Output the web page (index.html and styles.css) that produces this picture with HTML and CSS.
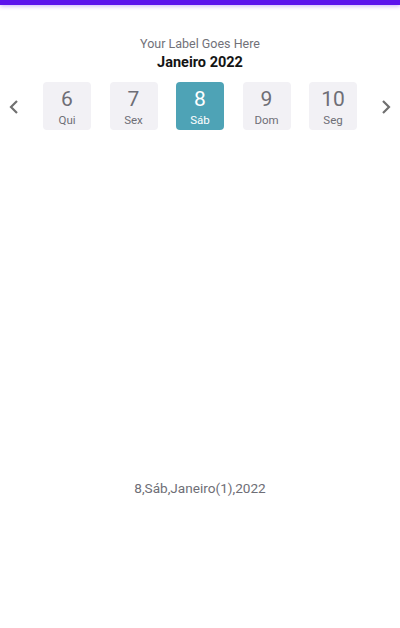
FILE: index.html
```html
<!DOCTYPE html>
<html lang="pt">
<head>
<meta charset="utf-8">
<link rel="stylesheet" href="styles.css">
</head>
<body>
<div class="topbar"></div>
<div class="page">
  <div class="label">Your Label Goes Here</div>
  <div class="month">Janeiro 2022</div>
  <div class="strip">
    <div class="nav">
      <svg width="14" height="16" viewBox="0 0 14 16"><path d="M10 2 L4 8 L10 14" fill="none" stroke="#707070" stroke-width="2.2"/></svg>
    </div>
    <div class="days">
      <div class="day"><span class="num">6</span><span class="dname">Qui</span></div>
      <div class="day"><span class="num">7</span><span class="dname">Sex</span></div>
      <div class="day selected"><span class="num">8</span><span class="dname">Sáb</span></div>
      <div class="day"><span class="num">9</span><span class="dname">Dom</span></div>
      <div class="day"><span class="num">10</span><span class="dname">Seg</span></div>
    </div>
    <div class="nav">
      <svg width="14" height="16" viewBox="0 0 14 16"><path d="M4 2 L10 8 L4 14" fill="none" stroke="#707070" stroke-width="2.2"/></svg>
    </div>
  </div>
  <div class="result">8,Sáb,Janeiro(1),2022</div>
</div>
</body>
</html>
```
FILE: styles.css
```css
html, body {
  margin: 0;
  padding: 0;
  background: #ffffff;
  font-family: Roboto, "Noto Sans", sans-serif;
}
.topbar {
  height: 5px;
  background: #5c14ec;
  box-shadow: 0 1px 4px rgba(92, 20, 236, 0.35);
}
.page {
  display: flex;
  flex-direction: column;
  align-items: center;
  padding-top: 31px;
}
.label {
  font-size: 12.5px;
  color: #717179;
  line-height: 16px;
}
.month {
  font-size: 14.5px;
  font-weight: bold;
  color: #141414;
  line-height: 18px;
  margin-top: 2px;
}
.strip {
  align-self: stretch;
  display: flex;
  align-items: center;
  margin-top: 10px;
}
.nav {
  width: 28px;
  display: flex;
  justify-content: center;
  align-items: center;
  padding-top: 2px;
}
.days {
  flex: 1;
  display: flex;
  gap: 18.5px;
  margin-left: 15px;
  margin-right: 14px;
}
.day {
  width: 48px;
  height: 48px;
  border-radius: 4px;
  background: #f2f1f5;
  display: flex;
  flex-direction: column;
  align-items: center;
  color: #6e6e76;
}
.num {
  font-size: 21px;
  line-height: 24px;
  margin-top: 5px;
}
.dname {
  font-size: 11.5px;
  line-height: 13px;
  margin-top: 3px;
}
.selected {
  background: #4ea3b6;
  color: #ffffff;
}
.result {
  margin-top: 350px;
  font-size: 13.6px;
  color: #6e6e76;
  line-height: 16px;
}
```
